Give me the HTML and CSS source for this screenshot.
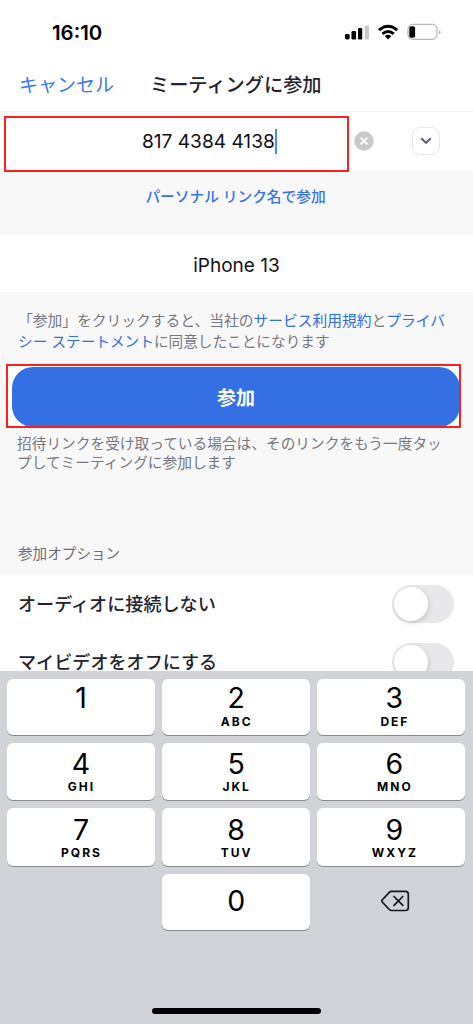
FILE: index.html
```html
<!DOCTYPE html>
<html lang="ja">
<head>
<meta charset="utf-8">
<title>ミーティングに参加</title>
<link rel="stylesheet" href="styles.css">
</head>
<body>
<div class="phone">
  <header class="status">
    <span class="time">16:10</span>
    <svg class="status-icons" width="98" height="20" viewBox="0 0 98 20">
      <rect x="2" y="11" width="4.600" height="5.500" rx="1.400"/>
      <rect x="8.500" y="8" width="4.600" height="8.500" rx="1.200"/>
      <rect x="15" y="5" width="4.200" height="11.500" rx="1.200"/>
      <rect x="21.700" y="2.500" width="4.300" height="14" rx="1.200" fill="#c9c9c9"/>
      <g fill="none" stroke="#000" stroke-width="2.900">
        <path d="M36 7.200Q45.100-.5 54.200 7.200"/>
        <path d="M39.400 10.900Q45.100 6.200 50.800 10.900"/>
      </g>
      <path d="M41.800 13Q45.100 10.500 48.400 13L45.100 16.600Z"/>
      <rect x="65" y="1.300" width="29" height="15" rx="4.500" fill="#fff" stroke="#a5a5a5"/>
      <rect x="66.300" y="3.200" width="5.800" height="11.500" rx="1.800"/>
      <path d="M96 7.200v4q1.500-.8 1.500-2t-1.500-2" fill="#aaa"/>
    </svg>
  </header>
  <nav class="nav">
    <a class="cancel">キャンセル</a>
    <h1 class="title">ミーティングに参加</h1>
  </nav>
  <section class="meeting">
    <span class="number">817 4384 4138</span><i class="caret"></i>
    <svg class="clear" width="20" height="20" viewBox="0 0 20 20"><circle cx="10" cy="10" r="9.700" fill="#c9c9cb"/><path d="M6.600 6.600l6.800 6.800M13.400 6.600l-6.800 6.800" stroke="#fff" stroke-width="2"/></svg>
    <span class="dropdown"><svg width="12" height="8" viewBox="0 0 12 8"><path d="M1.200 1.200L6 5.800L10.800 1.200" fill="none" stroke="#5f6075" stroke-width="2"/></svg></span>
    <i class="mark mark-number"></i>
  </section>
  <div class="link-row"><a>パーソナル リンク名で参加</a></div>
  <div class="device"><span>iPhone 13</span></div>
  <section class="join">
    <p class="terms"><span class="line line-wide">「参加」をクリックすると、当社の<a>サービス利用規約</a>と<a>プライバ</a></span><span class="line"><a>シー ステートメント</a>に同意したことになります</span></p>
    <div class="join-box"><button class="join-button">参加</button><i class="mark mark-join"></i></div>
    <p class="hint"><span class="line">招待リンクを受け取っている場合は、そのリンクをもう一度タッ</span><span class="line">プしてミーティングに参加します</span></p>
    <h2 class="options-title">参加オプション</h2>
  </section>
  <section class="options">
    <div class="option"><span>オーディオに接続しない</span><i class="switch"></i></div>
    <div class="option"><span>マイビデオをオフにする</span><i class="switch"></i></div>
  </section>
  <section class="keyboard">
    <div class="keys">
      <div class="key top"><b>1</b></div>
      <div class="key top"><b>2</b><small>ABC</small></div>
      <div class="key top right"><b>3</b><small>DEF</small></div>
      <div class="key"><b>4</b><small>GHI</small></div>
      <div class="key"><b>5</b><small>JKL</small></div>
      <div class="key right"><b>6</b><small>MNO</small></div>
      <div class="key low"><b>7</b><small>PQRS</small></div>
      <div class="key low"><b>8</b><small>TUV</small></div>
      <div class="key low right"><b>9</b><small>WXYZ</small></div>
      <div></div>
      <div class="key zero"><b>0</b></div>
      <div class="delete"><svg width="29" height="22" viewBox="0 0 29 22" fill="none" stroke="#16171a" stroke-width="1.700" stroke-linejoin="round"><path d="M10.500 1.300H24.500Q27.300 1.300 27.300 4V17.800Q27.300 20.500 24.500 20.500H10.500Q9.300 20.500 8.300 19.500L1.200 12Q.5 11 1.200 10L8.300 2.300Q9.300 1.300 10.500 1.300Z"/><path d="M13 6.500l8.800 8.800M21.800 6.500L13 15.300" stroke-linecap="round"/></svg></div>
    </div>
    <div class="home"></div>
  </section>
</div>
</body>
</html>
```

FILE: styles.css
```css
* { box-sizing: border-box; }
body { margin: 0; background: #fff; font-family: Inter, "Noto Sans CJK JP", sans-serif; }
h1, h2, p { margin: 0; }
a { color: #2f6de0; text-decoration: none; }
.phone { width: 473px; height: 1024px; overflow: hidden; display: flex; flex-direction: column; background: #fff; color: #23232f; }
.phone > * { flex: none; }
.status { height: 64px; display: flex; justify-content: space-between; align-items: center; padding: 1px 32px 0 52px; }
.time { font-size: 20.400px; font-weight: 600; color: #000; }
.status-icons { margin-top: 1px; }
.nav { height: 47px; display: flex; align-items: center; padding: 0 0 9px 19px; }
.cancel { width: 131px; font-size: 19px; color: #3a78f2; }
.title { font-size: 19.200px; font-weight: 500; white-space: nowrap; padding-top: 2px; }
.meeting { position: relative; height: 59px; border-top: 1px solid #f3f3f5; display: flex; align-items: center; padding-left: 142px; }
.number { width: 133px; font-size: 19.100px; color: #111; white-space: nowrap; }
.caret { width: 2px; height: 25px; background: #4a8cf7; }
.clear { margin-left: 77px; }
.dropdown { width: 28px; height: 28px; margin-left: 38px; border: 1.500px solid #e6e6ee; border-radius: 8px; display: flex; align-items: center; justify-content: center; }
.mark { position: absolute; border: 2px solid #fb1f1f; pointer-events: none; }
.mark-number { left: 4px; top: 4px; width: 345px; height: 56px; }
.link-row { height: 65px; background: #f8f8f9; text-align: center; padding: 17px 2px 0 0; font-size: 14.700px; line-height: 21px; font-weight: 500; }
.link-row a { color: #3574e8; }
.device { height: 57px; display: flex; align-items: center; justify-content: center; font-size: 19px; color: #111; padding-top: 3px; }
.join { height: 283px; background: #f8f8f9; padding-top: 19px; color: #77777f; font-size: 14.650px; }
.line { display: block; white-space: nowrap; }
.line-wide { font-size: 14.750px; }
.terms { height: 56px; padding-left: 18px; line-height: 20.500px; }
.join-box { position: relative; width: 455px; height: 64px; margin: -3px 0 0 6px; padding: 3px 0 0 6px; background: #fff; }
.join-button { display: block; width: 448px; height: 60px; border: 0; border-radius: 21px; background: #3470e4; color: #fff; font: 700 19px "Noto Sans CJK JP", sans-serif; padding: 0 0 2px; }
.mark-join { inset: 0; }
.hint { padding: 7px 0 0 17px; line-height: 19px; }
.hint .line { font-size: 14.700px; }
.options-title { padding: 70px 0 0 18px; font-size: 14.600px; line-height: 22px; font-weight: 400; color: #6d6d76; }
.options { height: 96px; overflow: hidden; }
.option { height: 58px; display: flex; align-items: center; justify-content: space-between; padding: 0 19px 0 18px; font-size: 18.100px; font-weight: 500; }
.option span { padding-bottom: 2px; }
.switch { width: 62px; height: 38px; border-radius: 19px; background: #e8e8ea; padding: 2px; }
.switch::before { content: ""; display: block; width: 34px; height: 34px; border-radius: 50%; background: #fff; box-shadow: 1px 2px 5px #00000026; }
.keyboard { height: 353px; background: #d1d3d9; padding: 8px 8px 10px 7px; color: #000; display: flex; flex-direction: column; }
.keys { display: grid; grid-template: 56px 57px 58px 56px / repeat(3, 148px); gap: 8px 7.200px; }
.key { background: #fff; border-radius: 6px; box-shadow: 0 1px 0 #898b90; text-align: center; padding-top: 4px; }
.key b, .key small { display: block; }
.key b { font-size: 28.500px; line-height: 33px; font-weight: 400; }
.key small { font-size: 12px; line-height: 14px; font-weight: 700; letter-spacing: 2px; text-indent: 1px; }
.top { padding-top: 2px; }
.top small { padding-top: 1px; }
.low { padding-top: 5px; }
.right { padding-left: 6px; }
.zero { padding-top: 10px; }
.delete { display: flex; align-items: center; justify-content: center; padding: 0 0 3px 8px; }
.home { width: 169px; height: 6px; border-radius: 3px; background: #000; margin: auto 0 0 145px; }
```
